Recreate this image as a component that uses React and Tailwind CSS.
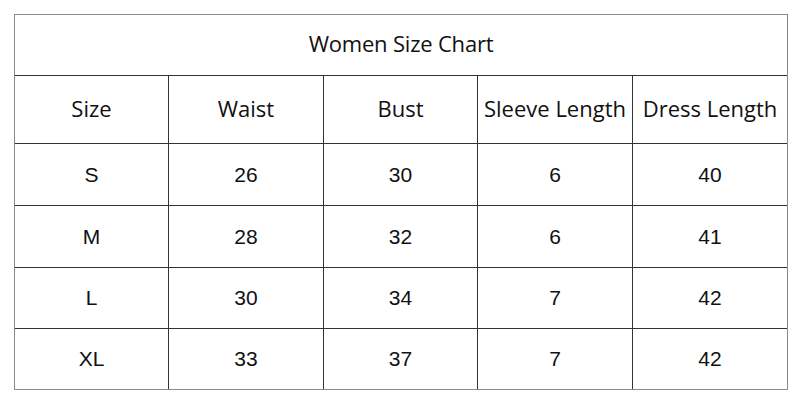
const HEAD = ['Size', 'Waist', 'Bust', 'Sleeve Length', 'Dress Length'];

const ROWS = [
  { h: 'h-[62px]', cells: ['S', '26', '30', '6', '40'] },
  { h: 'h-[62px]', cells: ['M', '28', '32', '6', '41'] },
  { h: 'h-[61px]', cells: ['L', '30', '34', '7', '42'] },
  { h: 'h-[60px]', cells: ['XL', '33', '37', '7', '42'] },
];

const COLS = 'grid grid-cols-[154px_155px_154px_155px_154px]';

export default function App() {
  return (
    <div className="w-[800px] h-[400px] bg-white pt-[14px] pl-[14px]">
      <div className="w-[774px] border border-[#8a8a8a] text-[#111]">
        {/* Title */}
        <div className="h-[61px] pb-[3px] border-b border-[#333] flex items-center justify-center font-['Open_Sans',sans-serif] text-[22px] tracking-[-0.2px]">
          Women Size Chart
        </div>

        {/* Header */}
        <div className={`${COLS} h-[68px] border-b border-[#333] font-['Open_Sans',sans-serif] text-[22px]`}>
          {HEAD.map((label, i) => (
            <div
              key={label}
              className={`flex items-center justify-center pb-[2px] whitespace-nowrap ${i < 4 ? 'border-r border-[#333]' : ''}`}
            >
              {label}
            </div>
          ))}
        </div>

        {/* Rows */}
        {ROWS.map((row, r) => (
          <div
            key={r}
            className={`${COLS} ${row.h} ${r < 3 ? 'border-b border-[#333]' : ''} font-['Liberation_Sans',sans-serif] text-[21px]`}
          >
            {row.cells.map((v, i) => (
              <div
                key={i}
                className={`flex items-center justify-center ${i < 4 ? 'border-r border-[#333]' : ''}`}
              >
                {v}
              </div>
            ))}
          </div>
        ))}
      </div>
    </div>
  );
}
